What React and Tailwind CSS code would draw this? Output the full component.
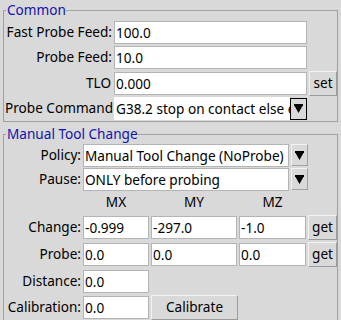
import React from 'react';

const Entry = ({ value, className = '' }) => (
  <div className={`h-[23px] bg-white border border-[#b4b4b4] pl-[1px] leading-[21px] whitespace-nowrap overflow-hidden ${className}`}>
    {value}
  </div>
);

const Btn = ({ children, className = '' }) => (
  <div className={`h-[25px] bg-[#d9d9d9] border border-t-[#f2f2f2] border-l-[#f2f2f2] border-r-[#9c9c9c] border-b-[#9c9c9c] flex items-center justify-center ${className}`}>
    {children}
  </div>
);

const Arrow = ({ boxed = false }) => (
  <div className={`w-[17px] h-[22px] flex items-center justify-center ${boxed ? 'border border-black' : 'border border-t-[#f2f2f2] border-l-[#f2f2f2] border-r-[#a0a0a0] border-b-[#a0a0a0]'}`}>
    <svg width="9" height="9" viewBox="0 0 9 9">
      <rect x="0" y="0" width="9" height="2" fill="#000" />
      <polygon points="0,1 9,1 4.5,9" fill="#000" />
    </svg>
  </div>
);

const App = () => {
  return (
    <div className="w-[341px] h-[320px] bg-[#d9d9d9] px-[3px] overflow-hidden text-[13.6px] text-black font-['Noto_Sans',sans-serif]">
      {/* Common */}
      <fieldset className="mt-[1px] border border-[#a0a0a0] pb-[1px]">
        <legend className="ml-[2px] pl-[1px] leading-[18px] text-[#1212b0]">Common</legend>
        <div className="flex flex-col gap-[2px] pt-[2px]">
          <div className="flex items-center h-[23px]">
            <div className="w-[110px] text-right pr-[2px] whitespace-nowrap">Fast Probe Feed:</div>
            <Entry value="100.0" className="w-[193px]" />
          </div>
          <div className="flex items-center h-[23px]">
            <div className="w-[110px] text-right pr-[2px]">Probe Feed:</div>
            <Entry value="10.0" className="w-[193px]" />
          </div>
          <div className="flex items-center h-[24px]">
            <div className="w-[110px] text-right pr-[3px]">TLO</div>
            <Entry value="0.000" className="w-[193px]" />
            <Btn className="ml-[2px] w-[28px]">set</Btn>
          </div>
          <div className="flex items-center h-[23px]">
            <div className="w-[110px] text-right pr-[1px] whitespace-nowrap">Probe Command</div>
            <div className="w-[176px] h-[23px] bg-white pl-[2px] leading-[23px] whitespace-nowrap overflow-hidden">G38.2 stop on contact else e</div>
            <Arrow boxed />
          </div>
        </div>
      </fieldset>

      {/* Manual Tool Change */}
      <fieldset className="mt-[3px] border border-[#a0a0a0] pb-[1px]">
        <legend className="ml-[2px] pl-[1px] leading-[18px] text-[#1212b0]">Manual Tool Change</legend>
        <div className="flex flex-col pt-[1px]">
          <div className="flex items-center h-[22px] gap-[2px]">
            <div className="w-[77px] text-right">Policy:</div>
            <Entry value="Manual Tool Change (NoProbe)" className="w-[206px] h-[22px] leading-[20px]" />
            <Arrow />
          </div>
          <div className="flex items-center h-[22px] gap-[2px] mt-[2px]">
            <div className="w-[77px] text-right">Pause:</div>
            <Entry value="ONLY before probing" className="w-[206px] h-[22px] leading-[20px]" />
            <Arrow />
          </div>
          <div className="flex items-center h-[24px] gap-[2px]">
            <div className="w-[77px]" />
            <div className="w-[66px] text-center">MX</div>
            <div className="w-[86px] text-center">MY</div>
            <div className="w-[67px] text-center">MZ</div>
          </div>
          <div className="flex items-center h-[25px] gap-[2px] mt-[1px]">
            <div className="w-[77px] text-right">Change:</div>
            <Entry value="-0.999" className="w-[66px]" />
            <Entry value="-297.0" className="w-[86px]" />
            <Entry value="-1.0" className="w-[67px]" />
            <Btn className="w-[29px]">get</Btn>
          </div>
          <div className="flex items-center h-[25px] gap-[2px] mt-[2px]">
            <div className="w-[77px] text-right">Probe:</div>
            <Entry value="0.0" className="w-[66px]" />
            <Entry value="0.0" className="w-[86px]" />
            <Entry value="0.0" className="w-[67px]" />
            <Btn className="w-[29px]">get</Btn>
          </div>
          <div className="flex items-center h-[25px] gap-[2px] mt-[2px]">
            <div className="w-[77px] text-right">Distance:</div>
            <Entry value="0.0" className="w-[66px]" />
          </div>
          <div className="flex items-center h-[25px] gap-[2px] mt-[1px]">
            <div className="w-[77px] text-right whitespace-nowrap">Calibration:</div>
            <Entry value="0.0" className="w-[66px]" />
            <Btn className="w-[87px]">Calibrate</Btn>
          </div>
        </div>
      </fieldset>
    </div>
  );
};

export default App;
